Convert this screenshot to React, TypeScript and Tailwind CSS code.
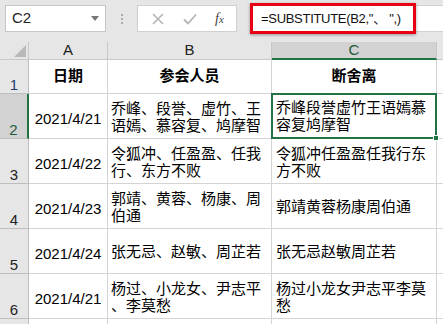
const rows = [
  { n: '2', date: '2021/4/21', b: ['乔峰、段誉、虚竹、王', '语嫣、慕容复、鸠摩智'], c: ['乔峰段誉虚竹王语嫣慕', '容复鸠摩智'] },
  { n: '3', date: '2021/4/22', b: ['令狐冲、任盈盈、任我', '行、东方不败'], c: ['令狐冲任盈盈任我行东', '方不败'] },
  { n: '4', date: '2021/4/23', b: ['郭靖、黄蓉、杨康、周', '伯通'], c: ['郭靖黄蓉杨康周伯通'] },
  { n: '5', date: '2021/4/24', b: ['张无忌、赵敏、周芷若'], c: ['张无忌赵敏周芷若'] },
  { n: '6', date: '2021/4/21', b: ['杨过、小龙女、尹志平', '、李莫愁'], c: ['杨过小龙女尹志平李莫', '愁'] },
];

const font = { fontFamily: '"Liberation Sans", "Noto Sans CJK SC", sans-serif' };

// one line sits lower in the row than two
function Lines({ lines, selected }: { lines: string[]; selected?: boolean }) {
  const pad = lines.length > 1 ? (selected ? 'pt-[4px]' : 'pt-[6px]') : 'pt-[14px]';
  return (
    <div className={'leading-[17px] ' + pad}>
      {lines.map((l) => (
        <div key={l} className="whitespace-nowrap">{l}</div>
      ))}
    </div>
  );
}

export default function App() {
  return (
    <div className="w-[443px] h-[324px] overflow-hidden bg-white text-[15px] text-black" style={font}>
      {/* formula toolbar */}
      <div className="h-[42px] bg-[#e6e6e6] flex items-start pt-[5px] pl-[5px]">
        <div className="w-[101px] h-[27px] bg-white border border-[#c6c6c6] flex items-center justify-between pl-[6px] pr-[6px]">
          <span className="text-[15px] text-[#222]">C2</span>
          <span className="w-0 h-0 border-l-[4px] border-r-[4px] border-t-[5px] border-l-transparent border-r-transparent border-t-[#777]" />
        </div>
        <div className="w-[31px] h-[27px] flex flex-col items-center justify-center gap-[2px]">
          <span className="w-[2px] h-[2px] bg-[#aaa]" />
          <span className="w-[2px] h-[2px] bg-[#aaa]" />
          <span className="w-[2px] h-[2px] bg-[#aaa]" />
        </div>
        <div className="w-[100px] h-[27px] bg-white border border-[#d0d0d0] flex items-center pl-[12px] gap-[14px]">
          <svg width="12" height="12" viewBox="0 0 12 12" className="ml-[2px]">
            <path d="M1 1L11 11M11 1L1 11" stroke="#b5b5b5" strokeWidth="1.6" />
          </svg>
          <svg width="14" height="12" viewBox="0 0 14 12" className="ml-[5px]">
            <path d="M1 6.5L5 10.5L13 1.5" stroke="#b5b5b5" strokeWidth="1.8" fill="none" />
          </svg>
          <span className="ml-[4px] italic text-[14px] text-[#444]" style={{ fontFamily: '"Liberation Serif", serif' }}>
            f<span className="text-[11px]">x</span>
          </span>
        </div>
        <div className="flex-1 h-[27px] ml-[14px] bg-white border-y border-[#d0d0d0] flex items-center">
          <div className="w-[166px] h-[31px] -ml-[1px] border-[3px] border-[#e60012] shadow-[0_1px_3px_rgba(0,0,0,0.35)] bg-white flex items-center pl-[8px]">
            <span className="text-[13px] tracking-[-0.3px] text-[#111] whitespace-nowrap">=SUBSTITUTE(B2,"、&nbsp;",)</span>
          </div>
        </div>
      </div>

      {/* grid */}
      <div className="grid grid-cols-[29px_79px_164px_165px_6px]">
        {/* column headers */}
        <div className="h-[18px] bg-[#e6e6e6] border-r border-b border-[#c8c8c8] flex items-end justify-end p-[2px]">
          <span className="w-0 h-0" style={{ borderBottom: '12px solid #b9b9b9', borderLeft: '12px solid transparent' }} />
        </div>
        <div className="h-[18px] bg-[#e6e6e6] border-r border-b border-[#c8c8c8] flex items-center justify-center text-[15px] text-[#222]">A</div>
        <div className="h-[18px] bg-[#e6e6e6] border-r border-b border-[#c8c8c8] flex items-center justify-center text-[15px] text-[#222]">B</div>
        <div className="h-[18px] bg-[#d2d2d2] border-r border-[#c8c8c8] border-b-2 border-b-[#217346] flex items-center justify-center text-[15px] text-[#1e5a3a]">C</div>
        <div className="h-[18px] bg-[#e6e6e6] border-b border-[#c8c8c8]" />

        {/* row 1 */}
        <div className="h-[34px] bg-[#e6e6e6] border-r border-b border-[#bdbdbd] flex items-end justify-center text-[15px] text-[#1f3f6e] leading-[17px]">1</div>
        <div className="h-[34px] border-r border-b border-[#d4d4d4] flex items-center justify-center font-bold">日期</div>
        <div className="h-[34px] border-r border-b border-[#d4d4d4] flex items-center justify-center font-bold">参会人员</div>
        <div className="h-[34px] border-r border-b border-[#d4d4d4] flex items-center justify-center font-bold">断舍离</div>
        <div className="h-[34px] border-b border-[#d4d4d4]" />

        {rows.map((r, i) => (
          <div key={r.n} className="contents">
            <div
              className={
                i === 0
                  ? 'h-[45px] bg-[#d2d2d2] border-r-2 border-r-[#217346] border-b border-[#bdbdbd] flex items-end justify-center text-[15px] text-[#1e5a3a] leading-[17px]'
                  : 'h-[45px] bg-[#e6e6e6] border-r border-b border-[#bdbdbd] flex items-end justify-center text-[15px] text-[#222] leading-[17px]'
              }
            >
              {r.n}
            </div>
            <div className="h-[45px] border-r border-b border-[#d4d4d4] flex items-center justify-center pt-[6px]">{r.date}</div>
            <div className="h-[45px] border-r border-b border-[#d4d4d4] pl-[3px]">
              <Lines lines={r.b} />
            </div>
            <div
              className={
                i === 0
                  ? 'relative h-[46px] border-2 border-[#217346] -mt-[1px] -ml-[1px] pl-[3px]'
                  : 'h-[45px] border-r border-b border-[#d4d4d4] pl-[4px]'
              }
            >
              <Lines lines={r.c} selected={i === 0} />
              {i === 0 && <span className="absolute -right-[4px] -bottom-[4px] w-[6px] h-[6px] bg-[#217346] border border-white" />}
            </div>
            <div className="h-[45px] border-b border-[#d4d4d4]" />
          </div>
        ))}

        {/* row 7 */}
        <div className="h-[20px] bg-[#e6e6e6] border-r border-[#bdbdbd]" />
        <div className="h-[20px] border-r border-[#d4d4d4]" />
        <div className="h-[20px] border-r border-[#d4d4d4]" />
        <div className="h-[20px] border-r border-[#d4d4d4]" />
        <div className="h-[20px]" />
      </div>
    </div>
  );
}
